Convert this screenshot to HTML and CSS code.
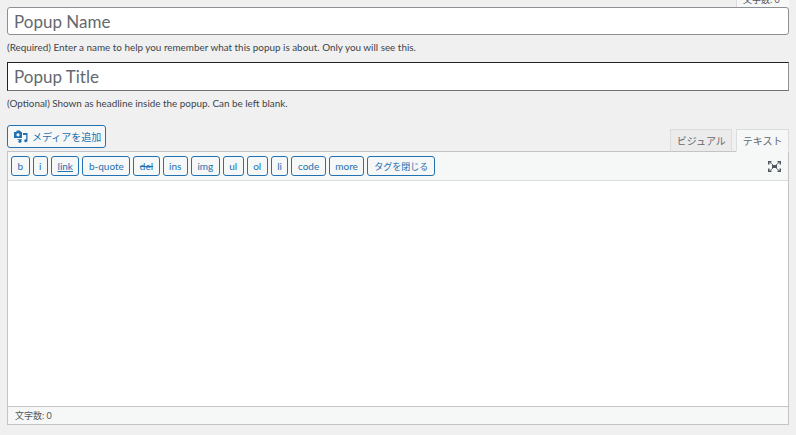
FILE: index.html
```html
<!DOCTYPE html>
<html lang="ja">
<head>
<meta charset="utf-8">
<title>Popup editor</title>
<link rel="stylesheet" href="styles.css">
</head>
<body>
<div class="prev-strip"><div class="prev-count"><span>文字数: 0</span></div></div>
<input class="field" type="text" placeholder="Popup Name">
<p class="help">(Required) Enter a name to help you remember what this popup is about. Only you will see this.</p>
<input class="field field-dark" type="text" placeholder="Popup Title">
<p class="help">(Optional) Shown as headline inside the popup. Can be left blank.</p>
<div class="editor-tools">
  <button class="media-btn" type="button">
    <svg class="media-icon" viewBox="0 0 14 13" width="14" height="13" aria-hidden="true"><path fill="#2271b1" d="M0 2h2l1-1.500h3L7 2h1v6H0z"/><circle cx="4" cy="4.800" r="1.600" fill="#f6f7f7"/><path fill="#2271b1" d="M9 3h4.500v7.500c0 1-.8 1.700-1.700 1.700s-1.600-.6-1.600-1.500.7-1.500 1.600-1.500h.4V5H9zM3.500 9h4v2.200c0 .9-.7 1.600-1.600 1.600s-1.600-.6-1.600-1.400.7-1.400 1.600-1.400h.3v-.2H3.500z"/></svg>
    メディアを追加
  </button>
  <div class="tabs">
    <button class="tab" type="button">ビジュアル</button>
    <button class="tab tab-active" type="button">テキスト</button>
  </div>
</div>
<div class="editor">
  <div class="toolbar">
    <button class="qt" type="button">b</button>
    <button class="qt" type="button">i</button>
    <button class="qt qt-link" type="button">link</button>
    <button class="qt" type="button">b-quote</button>
    <button class="qt qt-del" type="button">del</button>
    <button class="qt" type="button">ins</button>
    <button class="qt" type="button">img</button>
    <button class="qt" type="button">ul</button>
    <button class="qt" type="button">ol</button>
    <button class="qt" type="button">li</button>
    <button class="qt" type="button">code</button>
    <button class="qt" type="button">more</button>
    <button class="qt qt-ja" type="button">タグを閉じる</button>
    <svg class="fullscreen" viewBox="0 0 13 11" width="13" height="11" aria-hidden="true"><path fill="none" stroke="#6b7278" stroke-width="1" d="M2 1.500l3 2.500M11 1.500L8 4M2 9.500L5 7M11 9.500L8 7"/><path fill="#50575e" d="M0 0h3.500v1.500H1.500V3.500H0zM9.500 0H13v3.500h-1.500V1.500h-2zM0 7.500h1.500v2h2V11H0zM11.500 7.500H13V11H9.500V9.500h2zM4 4h5v3H4z"/></svg>
  </div>
  <div class="editor-body"></div>
  <div class="status">文字数: 0</div>
</div>
</body>
</html>
```
FILE: styles.css
```css
* { box-sizing: border-box; }
html, body { height: 100%; }
body {
  margin: 0;
  padding: 0 7px;
  background: #f0f0f0;
  color: #3c434a;
  font-family: Lato, "Noto Sans CJK JP", sans-serif;
  font-size: 12px;
  overflow: hidden;
}
.prev-strip {
  height: 7px;
  display: flex;
  justify-content: flex-end;
}
.prev-count {
  width: 53px;
  height: 7px;
  background: #f6f7f7;
  border-left: 1px solid #dcdcde;
  overflow: hidden;
  color: #50575e;
  font-size: 9px;
  line-height: 11px;
  padding-left: 6px;
}
.prev-count span { display: block; margin-top: -6px; }
.field {
  display: block;
  width: 100%;
  height: 28px;
  margin: 0;
  padding: 0 6px;
  border: 1px solid #8c8f94;
  border-radius: 3px;
  background: #fff;
  font: 17px Lato, sans-serif;
  color: #3c434a;
  outline: none;
}
.field::placeholder { color: #646970; opacity: 1; }
.field-dark {
  height: 29px;
  border-color: #1d2327 #8c8f94 #6f7276 #1d2327;
  border-radius: 0;
}
.help {
  margin: 0;
  height: 27px;
  padding-top: 5px;
  font-size: 9.900px;
  line-height: 14px;
  color: #3c434a;
}
.field-dark + .help { height: 33px; }
.editor-tools {
  display: flex;
  justify-content: space-between;
  align-items: flex-end;
  height: 27px;
}
.media-btn {
  display: flex;
  align-items: center;
  gap: 4px;
  width: 99px;
  height: 23px;
  margin-bottom: 3px;
  padding: 0 0 0 6px;
  border: 1px solid #2271b1;
  border-radius: 3px;
  background: #f6f7f7;
  color: #2271b1;
  font: 10px "Noto Sans CJK JP", sans-serif;
  white-space: nowrap;
}
.media-icon { flex: none; }
.tabs { display: flex; gap: 4px; margin-bottom: -1px; position: relative; }
.tab {
  height: 23px;
  padding: 0 5.500px;
  border: 1px solid #dcdcde;
  border-bottom: 1px solid #c3c4c7;
  background: #ebebeb;
  color: #646970;
  font: 10px "Noto Sans CJK JP", sans-serif;
}
.tab-active {
  background: #f6f7f7;
  border-bottom-color: #f6f7f7;
}
.editor {
  height: 274px;
  border: 1px solid #c3c4c7;
  display: flex;
  flex-direction: column;
  background: #fff;
}
.toolbar {
  display: flex;
  align-items: center;
  gap: 3px;
  height: 29px;
  padding: 4px 7px 4px 3px;
  background: #f6f7f7;
  border-bottom: 1px solid #dcdcde;
}
.qt {
  height: 20px;
  padding: 0 5.500px;
  border: 1px solid #2271b1;
  border-radius: 3px;
  background: #f6f7f7;
  color: #2271b1;
  font: 10px Lato, "Noto Sans CJK JP", sans-serif;
  white-space: nowrap;
}
.qt-ja { font-size: 9px; padding: 0 6px; }
.qt-link { text-decoration: underline; }
.qt-del { text-decoration: line-through; }
.fullscreen { margin-left: auto; }
.editor-body { flex: 1; background: #fff; }
.status {
  height: 18px;
  padding-left: 7px;
  background: #f6f7f7;
  border-top: 1px solid #c3c4c7;
  color: #50575e;
  font-size: 9px;
  line-height: 17px;
}
```
